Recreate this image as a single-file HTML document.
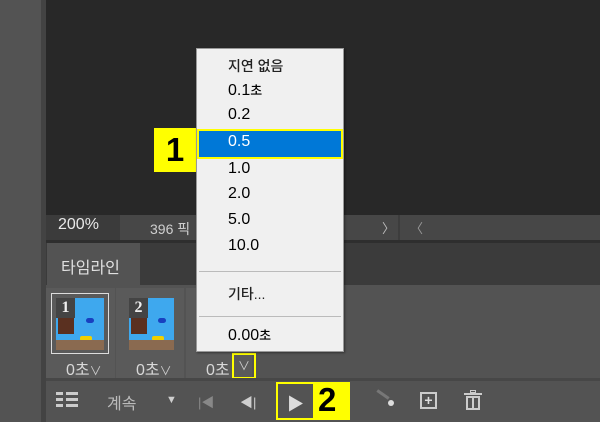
<!DOCTYPE html>
<html><head><meta charset="utf-8"><style>
*{margin:0;padding:0;box-sizing:border-box}
body{width:600px;height:422px;overflow:hidden;background:#535353;position:relative;font-family:"Liberation Sans","Noto Sans CJK KR",sans-serif}
.a{position:absolute}
.mi{position:absolute;left:228px;font-size:16px;color:#000;font-weight:500}
.fr{position:absolute;top:288px;height:92px;background:#5a5a5a}
.th{position:absolute;background:#3ea8ee;overflow:hidden}
.num{position:absolute;left:0;top:0;width:19px;height:20px;background:#444;color:#eee;font:bold 16px "Liberation Serif",serif;text-align:center;line-height:20px}
.d{position:absolute;top:356px;font-size:16px;color:#d8d8d8}
.ic{position:absolute;color:#cfcfcf}
</style></head><body>
<div class="a" style="left:0;top:0;width:41px;height:422px;background:#535353"></div>
<div class="a" style="left:41px;top:0;width:5px;height:422px;background:#434343"></div>
<div class="a" style="left:46px;top:0;width:554px;height:215px;background:#282828"></div>
<div class="a" style="left:46px;top:215px;width:554px;height:25px;background:#474747"></div>
<div class="a" style="left:46px;top:215px;width:74px;height:25px;background:#3b3b3b"></div>
<div class="a" style="left:58px;top:216px;font-size:16px;color:#e8e8e8">200%</div>
<div class="a" style="left:150px;top:219px;font-size:14px;color:#cfcfcf">396 픽</div>
<div class="a" style="left:340px;top:219px;font-size:13px;color:#bbb">)</div>
<div class="a" style="left:382px;top:218px;font-size:13px;color:#bbb">〉</div>
<div class="a" style="left:398px;top:215px;width:2px;height:25px;background:#3d3d3d"></div>
<div class="a" style="left:410px;top:218px;font-size:13px;color:#999">〈</div>
<div class="a" style="left:46px;top:240px;width:554px;height:3px;background:#2e2e2e"></div>
<div class="a" style="left:46px;top:243px;width:554px;height:42px;background:#3b3b3b"></div>
<div class="a" style="left:47px;top:243px;width:93px;height:42px;background:#535353"></div>
<div class="a" style="left:61px;top:254px;font-size:16px;color:#e0e0e0">타임라인</div>
<div class="fr" style="left:46px;width:69px"></div>
<div class="fr" style="left:116px;width:68px"></div>
<div class="fr" style="left:186px;width:66px"></div>
<div class="a" style="left:51px;top:293px;width:58px;height:61px;border:1px solid #ddd"></div>
<div class="th" style="left:56px;top:298px;width:48px;height:52px">
<div class="a" style="left:2px;top:18px;width:16px;height:18px;background:#5a3020"></div>
<div class="a" style="left:30px;top:20px;width:8px;height:5px;background:#1840c0;border-radius:3px"></div>
<div class="a" style="left:24px;top:38px;width:12px;height:5px;background:#f0d000;border-radius:2px"></div>
<div class="a" style="left:0;top:42px;width:48px;height:10px;background:#8a6a50"></div>
<div class="num">1</div></div>
<div class="th" style="left:129px;top:298px;width:45px;height:52px">
<div class="a" style="left:2px;top:18px;width:16px;height:18px;background:#5a3020"></div>
<div class="a" style="left:29px;top:20px;width:8px;height:5px;background:#1840c0;border-radius:3px"></div>
<div class="a" style="left:23px;top:38px;width:12px;height:5px;background:#f0d000;border-radius:2px"></div>
<div class="a" style="left:0;top:42px;width:45px;height:10px;background:#8a6a50"></div>
<div class="num">2</div></div>
<div class="d" style="left:66px">0초<span style="font-size:12px;color:#ccc">∨</span></div>
<div class="d" style="left:136px">0초<span style="font-size:12px;color:#ccc">∨</span></div>
<div class="d" style="left:206px">0초</div>
<div class="a" style="left:232px;top:353px;width:24px;height:26px;border:2px solid #ffff00"></div>
<div class="a" style="left:238px;top:357px;font-size:12px;color:#ccc">∨</div>
<div class="a" style="left:46px;top:378px;width:554px;height:3px;background:#474747"></div>
<div class="a" style="left:56px;top:389px;width:22px;height:20px">
<div class="a" style="left:0;top:3px;width:22px;height:3px;background:#ccc"></div>
<div class="a" style="left:0;top:9px;width:22px;height:3px;background:#ccc"></div>
<div class="a" style="left:0;top:15px;width:22px;height:3px;background:#ccc"></div>
<div class="a" style="left:7px;top:0;width:3px;height:20px;background:#535353"></div></div>
<div class="a" style="left:107px;top:390px;font-size:16px;color:#bbb">계속</div>
<div class="ic" style="left:166px;top:394px;font-size:11px">▼</div>
<div class="ic" style="left:198px;top:392px;font-size:13px;color:#888">|◀</div>
<div class="ic" style="left:240px;top:392px;font-size:13px">◀|</div>
<div class="a" style="left:276px;top:382px;width:74px;height:38px;background:#ffff00"></div>
<div class="a" style="left:278px;top:384px;width:35px;height:34px;background:#535353"></div>
<div class="ic" style="left:287px;top:390px;font-size:17px;color:#ddd">▶</div>
<div class="a" style="left:318px;top:381px;font:bold 33px 'Liberation Sans',sans-serif;color:#000">2</div>
<div class="a" style="left:376px;top:393px;width:14px;height:3px;background:#777;transform:rotate(35deg)"></div>
<div class="a" style="left:388px;top:400px;width:6px;height:6px;background:#ddd;border-radius:50%"></div>
<div class="a" style="left:420px;top:392px;width:17px;height:17px;border:2px solid #ccc;color:#ddd;font-size:14px;line-height:13px;text-align:center;font-weight:bold">+</div>
<div class="a" style="left:464px;top:390px;width:18px;height:20px">
<div class="a" style="left:0;top:3px;width:18px;height:2px;background:#ccc"></div>
<div class="a" style="left:6px;top:0;width:6px;height:3px;border:1px solid #ccc"></div>
<div class="a" style="left:2px;top:6px;width:14px;height:14px;border:2px solid #ccc"></div>
<div class="a" style="left:8px;top:8px;width:2px;height:10px;background:#ccc"></div></div>
<div class="a" style="left:154px;top:128px;width:42px;height:44px;background:#ffff00;font:bold 33px 'Liberation Sans',sans-serif;color:#000;text-align:center;line-height:44px">1</div>
<div class="a" style="left:196px;top:48px;width:148px;height:304px;background:#f0f0f0;border:1px solid #999;box-shadow:1px 1px 2px rgba(0,0,0,.4)"></div>
<div class="a" style="left:197px;top:129px;width:146px;height:30px;background:#0078d7;border:2px solid #ffff00"></div>
<div class="mi" style="top:56px;font-size:14px;color:#222">지연 없음</div>
<div class="mi" style="top:80px">0.1<span style="font-size:13px">초</span></div>
<div class="mi" style="top:106px">0.2</div>
<div class="mi" style="top:133px;color:#fff">0.5</div>
<div class="mi" style="top:160px">1.0</div>
<div class="mi" style="top:185px">2.0</div>
<div class="mi" style="top:211px">5.0</div>
<div class="mi" style="top:237px">10.0</div>
<div class="a" style="left:199px;top:271px;width:142px;height:1px;background:#bbb"></div>
<div class="mi" style="top:284px;font-size:14px;color:#222">기타...</div>
<div class="a" style="left:199px;top:316px;width:142px;height:1px;background:#bbb"></div>
<div class="mi" style="top:325px">0.00<span style="font-size:13px">초</span></div>
</body></html>
